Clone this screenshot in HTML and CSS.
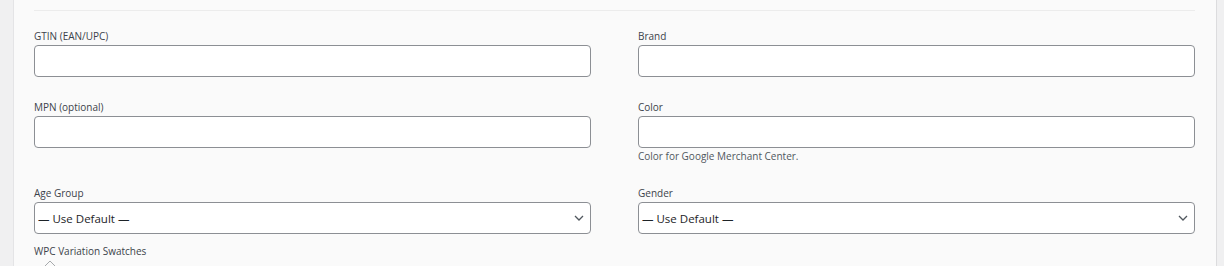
FILE: index.html
```html
<!DOCTYPE html>
<html lang="en">
<head>
    <meta charset="UTF-8">
    <meta name="viewport" content="width=device-width, initial-scale=1.0">
    <title>Product Feed Fields</title>
    <link rel="stylesheet" href="styles.css">
</head>
<body>
    <div class="panel">
        <div class="separator"></div>

        <div class="row">
            <div class="field">
                <label for="gtin">GTIN (EAN/UPC)</label>
                <input type="text" id="gtin" class="text-input">
            </div>
            <div class="field">
                <label for="brand">Brand</label>
                <input type="text" id="brand" class="text-input">
            </div>
        </div>

        <div class="row">
            <div class="field">
                <label for="mpn">MPN (optional)</label>
                <input type="text" id="mpn" class="text-input">
            </div>
            <div class="field">
                <label for="color">Color</label>
                <input type="text" id="color" class="text-input">
                <p class="hint">Color for Google Merchant Center.</p>
            </div>
        </div>

        <div class="row row-last">
            <div class="field">
                <label for="age">Age Group</label>
                <div class="select-wrap">
                    <select id="age" class="select-input">
                        <option>— Use Default —</option>
                    </select>
                    <svg class="select-arrow" width="10" height="6" viewBox="0 0 10 6"><path d="M1 1 L5 5 L9 1" fill="none" stroke="#50575e" stroke-width="1.3"/></svg>
                </div>
            </div>
            <div class="field">
                <label for="gender">Gender</label>
                <div class="select-wrap">
                    <select id="gender" class="select-input">
                        <option>— Use Default —</option>
                    </select>
                    <svg class="select-arrow" width="10" height="6" viewBox="0 0 10 6"><path d="M1 1 L5 5 L9 1" fill="none" stroke="#50575e" stroke-width="1.3"/></svg>
                </div>
            </div>
        </div>

        <div class="swatches">
            <span class="swatches-title">WPC Variation Swatches</span>
            <svg class="toggle" width="12" height="7" viewBox="0 0 12 7"><path d="M1 6 L6 1 L11 6" fill="none" stroke="#a7aaad" stroke-width="1"/></svg>
        </div>
    </div>
</body>
</html>
```

FILE: styles.css
```css
body {
    font-family: "Open Sans", "Noto Sans", Arial, sans-serif;
    background-color: #f0f0f1;
    margin: 0;
    padding: 0;
    height: 266px;
    overflow: hidden;
}
.panel {
    margin-left: 13px;
    width: 1161px;
    height: 266px;
    padding: 0 21px 0 20px;
    background-color: #fafafa;
    border-left: 1px solid #e4e4e6;
    border-right: 1px solid #dcdcde;
}
.separator {
    height: 10px;
    border-bottom: 1px solid #ececec;
    margin-bottom: 18px;
}
.row {
    display: grid;
    grid-template-columns: 1fr 1fr;
    column-gap: 47px;
    margin-bottom: 23px;
}
.row-last {
    margin-bottom: 10px;
}
.field label {
    display: block;
    font-size: 10px;
    line-height: 14px;
    color: #3c434a;
    margin-bottom: 2px;
}
.text-input,
.select-input {
    display: block;
    box-sizing: border-box;
    width: 100%;
    height: 32px;
    margin: 0;
    padding: 0 8px;
    background-color: #fff;
    border: 1px solid #8c8f94;
    border-radius: 4px;
    font-family: inherit;
    font-size: 11.5px;
    color: #1d2327;
}
.select-wrap {
    position: relative;
}
.select-input {
    -webkit-appearance: none;
    appearance: none;
    padding: 0 24px 0 3px;
}
.select-arrow {
    position: absolute;
    right: 7px;
    top: 13px;
}
.hint {
    margin: 1px 0 0;
    font-size: 10px;
    line-height: 14px;
    color: #50575e;
}
.swatches-title {
    display: block;
    font-size: 10px;
    line-height: 14px;
    color: #3c434a;
}
.toggle {
    display: block;
    margin: 2px 0 0 10px;
}
```
